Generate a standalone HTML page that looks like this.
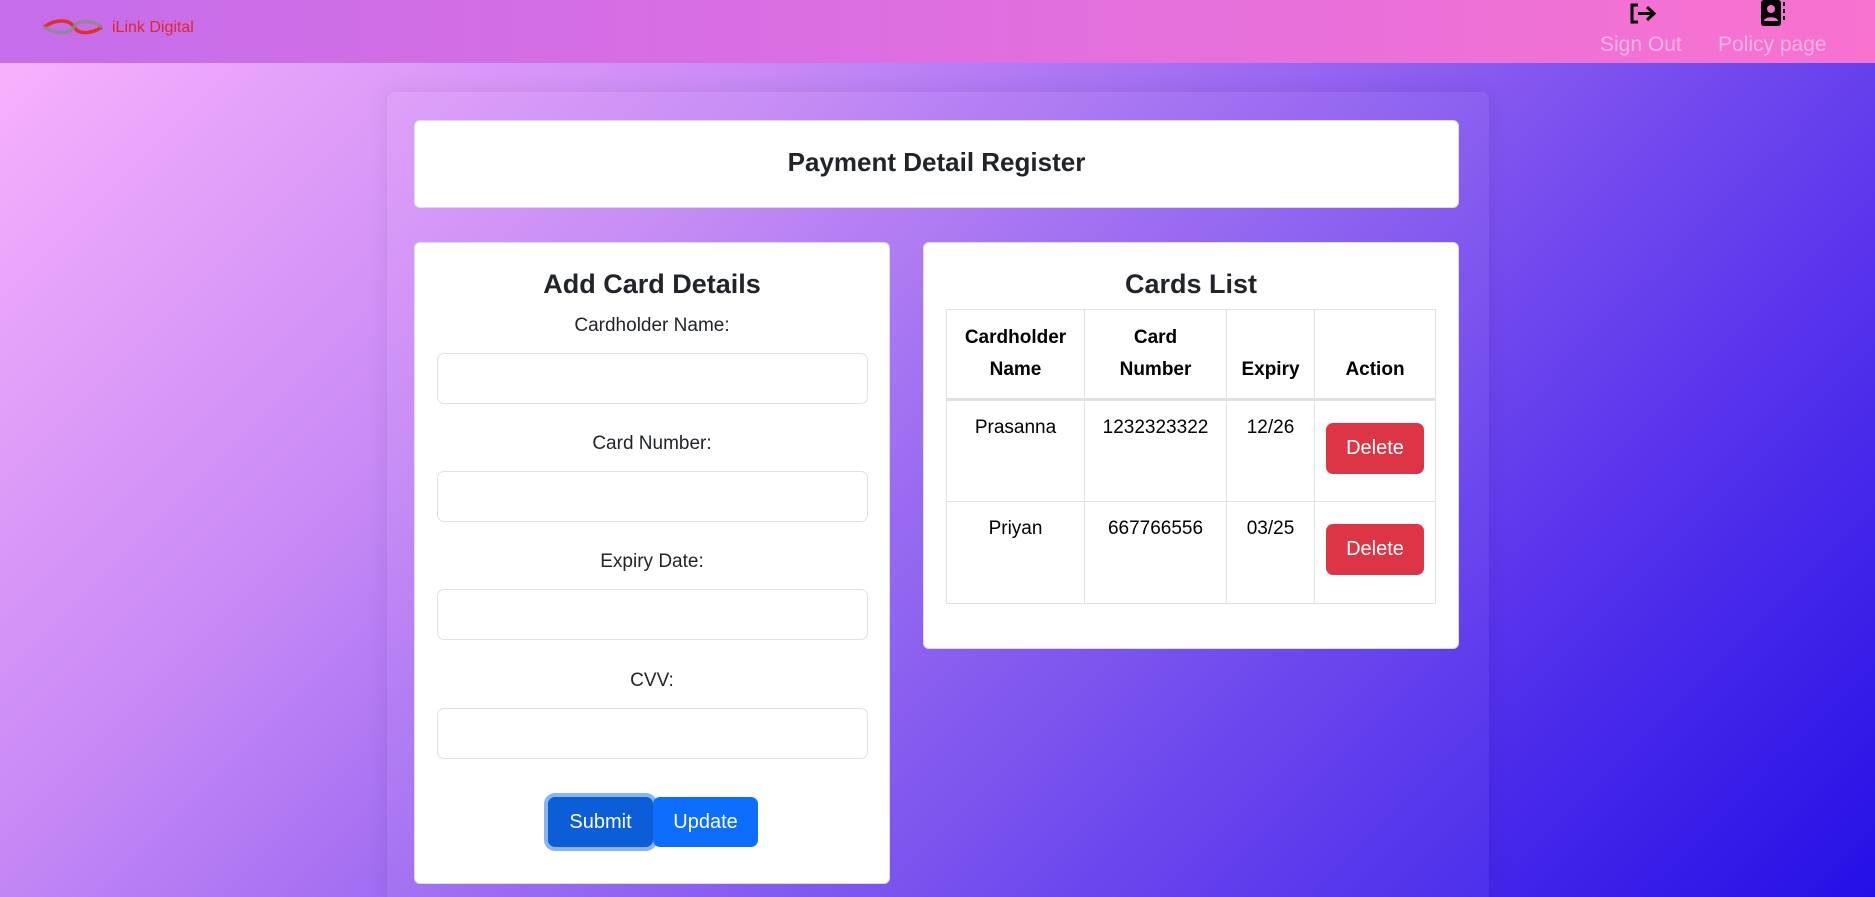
<!DOCTYPE html>
<html><head><meta charset="utf-8"><style>
*{box-sizing:border-box;margin:0;padding:0}
html{width:1875px;height:897px;overflow:hidden;background:linear-gradient(135deg,#fbb4fd 0%,#c88af5 30%,#8a5cf0 55%,#5b36ec 75%,#2410e6 100%) no-repeat;background-size:1875px 897px}
body{width:1875px;height:897px;overflow:hidden;position:relative;font-family:"Liberation Sans",sans-serif;color:#212529;background:transparent}
.nav{position:absolute;left:0;top:0;width:1875px;height:63px;background:linear-gradient(90deg,#c56deb,#de6fe0 50%,#f872cf);}
.abs{position:absolute}
.wrap{position:absolute;left:387px;top:92px;width:1102px;height:805px;background:rgba(255,255,255,0.05);border-radius:8px 8px 0 0;box-shadow:0 0 20px rgba(0,0,0,0.08)}
.card{position:absolute;background:#fff;border-radius:6px;border:1px solid #ddd}
.c{text-align:center}
.lbl{position:absolute;left:0;width:100%;text-align:center;font-size:19px}
.inp{position:absolute;left:22px;width:431px;height:51px;border:1px solid #dee2e6;border-radius:7px}
table{border-collapse:collapse;position:absolute;left:946px;top:309px;width:490px;table-layout:fixed}
td,th{border:1px solid #dee2e6;text-align:center;font-size:19px;vertical-align:top}
th{vertical-align:bottom;padding:12px 6px 12px;line-height:32px;color:#000}
thead tr{border-bottom:3px solid #dee2e6}
td{padding:16px 4px;height:102px;color:#000}
.del{display:inline-block;background:#dc3545;color:#fff;border-radius:7px;width:98px;height:51px;line-height:51px;margin-top:6px;font-size:20px}
.btn{position:absolute;color:#fff;font-size:20px;text-align:center;border-radius:7px;height:50px;line-height:50px}
</style></head><body>
<div class="nav">
<svg class="abs" style="left:42px;top:18px" width="62" height="18" viewBox="0 0 62 18"><path d="M2 9 C15 0 28 2 32 9 C36 16 48 17 60 9" stroke="#e0302a" stroke-width="3.5" fill="none"/><path d="M2 9 C15 17 28 16 32 9 C36 2 48 1 60 9" stroke="#8a8a8a" stroke-width="3.5" fill="none" opacity=".8"/></svg>
<div class="abs" style="left:112px;top:19px;font-size:16px;color:#d92b2b">iLink Digital</div>
<svg class="abs" style="left:1628px;top:2px" width="30" height="24" viewBox="0 0 30 24"><path d="M10 3H4v17h6" stroke="#000" stroke-width="3" fill="none"/><path d="M10 11.5h15M19 5l7 6.5-7 6.5" stroke="#000" stroke-width="3" fill="none"/></svg>
<svg class="abs" style="left:1760px;top:0" width="28" height="27" viewBox="0 0 28 27"><rect x="1" y="0" width="20" height="26" rx="3" fill="#000"/><circle cx="11" cy="9" r="4" fill="#f872cf"/><path d="M4 21c0-5 14-5 14 0z" fill="#f872cf"/><path d="M24 2v4M24 9v4M24 16v4" stroke="#000" stroke-width="2"/></svg>
<div class="abs" style="left:1600px;top:33px;font-size:21px;color:#f9b2e6">Sign Out</div>
<div class="abs" style="left:1718px;top:33px;font-size:21px;color:#f9b2e6">Policy page</div>
</div>
<div class="wrap"></div>
<div class="card" style="left:414px;top:120px;width:1045px;height:88px"><div class="c" style="font-size:26px;font-weight:bold;margin-top:26px">Payment Detail Register</div></div>
<div class="card" style="left:414px;top:242px;width:476px;height:642px">
<div class="lbl" style="top:26px;font-size:27px;font-weight:bold">Add Card Details</div>
<div class="lbl" style="top:72px">Cardholder Name:</div>
<div class="inp" style="top:110px"></div>
<div class="lbl" style="top:190px">Card Number:</div>
<div class="inp" style="top:228px"></div>
<div class="lbl" style="top:308px">Expiry Date:</div>
<div class="inp" style="top:346px"></div>
<div class="lbl" style="top:427px">CVV:</div>
<div class="inp" style="top:465px"></div>
<div class="btn" style="left:133px;top:554px;width:105px;background:#0b5ed7;box-shadow:0 0 0 4px #8ab4f0">Submit</div>
<div class="btn" style="left:238px;top:554px;width:105px;background:#0d6efd">Update</div>
</div>
<div class="card" style="left:923px;top:242px;width:536px;height:407px">
<div class="lbl" style="top:26px;font-size:27px;font-weight:bold">Cards List</div>
</div>
<table>
<thead><tr><th style="width:138px">Cardholder Name</th><th style="width:142px">Card<br>Number</th><th style="width:88px">Expiry</th><th>Action</th></tr></thead>
<tbody>
<tr><td>Prasanna</td><td>1232323322</td><td>12/26</td><td><span class="del">Delete</span></td></tr>
<tr><td>Priyan</td><td>667766556</td><td>03/25</td><td><span class="del">Delete</span></td></tr>
</tbody></table>
</body></html>
